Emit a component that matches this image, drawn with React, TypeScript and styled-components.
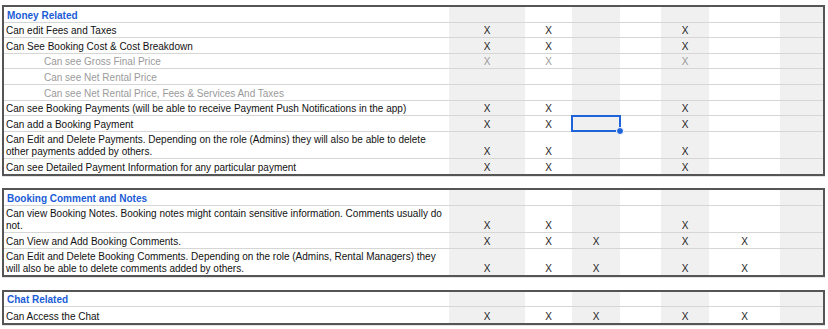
import React from "react";
import styled, { createGlobalStyle, css } from "styled-components";

const GlobalStyle = createGlobalStyle`
  html, body {
    margin: 0;
    padding: 0;
    background: #ffffff;
  }
  body {
    font-family: "Liberation Sans", Arial, sans-serif;
    font-size: 10px;
    color: #111;
  }
  * { box-sizing: border-box; }
`;

const COLS = "445px 76px 47px 48px 41px 48px 71px 43px";
const SHADED = [false, true, false, true, false, true, false, true];

const Sheet = styled.div`
  width: 828px;
  height: 329px;
  padding: 5px 3px 0 2px;
  display: flex;
  flex-direction: column;
  overflow: hidden;
`;

const Section = styled.div`
  width: 823px;
  border: 2px solid #555555;
  display: flex;
  flex-direction: column;
`;

const Spacer = styled.div<{ $h: number }>`
  height: ${(p) => p.$h}px;
  flex: none;
  border-top: 1px solid #e4e4e4;
`;

const Row = styled.div<{ $last?: boolean }>`
  display: grid;
  grid-template-columns: ${COLS};
  min-height: 15.6px;
  border-bottom: ${(p) => (p.$last ? "none" : "1px solid #d6d6d6")};
`;

const Cell = styled.div<{ $shade?: boolean }>`
  position: relative;
  display: flex;
  align-items: flex-end;
  padding-top: 2px;
  padding-bottom: 0;
  line-height: 12px;
  background: ${(p) => (p.$shade ? "#f0f0f0" : "#ffffff")};
`;

const Label = styled(Cell)<{ $indent?: boolean; $muted?: boolean; $head?: boolean }>`
  padding-left: ${(p) => (p.$indent ? "40px" : "2px")};
  padding-right: 2px;
  color: ${(p) => (p.$muted ? "#9a9a9a" : "#111111")};
  ${(p) =>
    p.$head &&
    css`
      color: #1a5cd6;
      font-weight: bold;
      padding-left: 3px;
    `}
`;

const Mark = styled(Cell)<{ $muted?: boolean }>`
  justify-content: center;
  color: ${(p) => (p.$muted ? "#9a9a9a" : "#222222")};
`;

const Selection = styled.div`
  position: absolute;
  z-index: 2;
  left: -1px;
  top: -1px;
  right: -1px;
  bottom: -1px;
  border: 2px solid #1f63d9;
  pointer-events: none;
`;

const Handle = styled.div`
  position: absolute;
  right: -5px;
  bottom: -5px;
  width: 8px;
  height: 8px;
  border-radius: 50%;
  background: #1f63d9;
  border: 1px solid #ffffff;
`;

type Item = {
  text: string;
  marks: number[];
  indent?: boolean;
  muted?: boolean;
  selected?: number;
};

type Group = { title: string; gapBefore: number; items: Item[] };

const ALL = [1, 2, 3, 5, 6];
const MAIN = [1, 2, 5];

const groups: Group[] = [
  {
    title: "Money Related",
    gapBefore: 0,
    items: [
      { text: "Can edit Fees and Taxes", marks: MAIN },
      { text: "Can See Booking Cost & Cost Breakdown", marks: MAIN },
      { text: "Can see Gross Final Price", marks: MAIN, indent: true, muted: true },
      { text: "Can see Net Rental Price", marks: [], indent: true, muted: true },
      {
        text: "Can see Net Rental Price, Fees & Services And Taxes",
        marks: [],
        indent: true,
        muted: true,
      },
      {
        text: "Can see Booking Payments (will be able to receive Payment Push Notifications in the app)",
        marks: MAIN,
      },
      { text: "Can add a Booking Payment", marks: MAIN, selected: 3 },
      {
        text: "Can Edit and Delete Payments. Depending on the role (Admins) they will also be able to delete other payments added by others.",
        marks: MAIN,
      },
      { text: "Can see Detailed Payment Information for any particular payment", marks: MAIN },
    ],
  },
  {
    title: "Booking Comment and Notes",
    gapBefore: 12,
    items: [
      {
        text: "Can view Booking Notes. Booking notes might contain sensitive information. Comments usually do not.",
        marks: MAIN,
      },
      { text: "Can View and Add Booking Comments.", marks: ALL },
      {
        text: "Can Edit and Delete Booking Comments. Depending on the role (Admins, Rental Managers) they will also be able to delete comments added by others.",
        marks: ALL,
      },
    ],
  },
  {
    title: "Chat Related",
    gapBefore: 13,
    items: [{ text: "Can Access the Chat", marks: ALL }],
  },
];

const MarkCells: React.FC<{ item?: Item }> = ({ item }) => (
  <>
    {[1, 2, 3, 4, 5, 6, 7].map((c) => (
      <Mark key={c} $shade={SHADED[c]} $muted={item?.muted}>
        {item && item.marks.includes(c) ? "X" : ""}
        {item && item.selected === c && (
          <Selection>
            <Handle />
          </Selection>
        )}
      </Mark>
    ))}
  </>
);

const GroupTable: React.FC<{ group: Group }> = ({ group }) => (
  <Section>
    <Row>
      <Label $head>{group.title}</Label>
      <MarkCells />
    </Row>
    {group.items.map((item, i) => (
      <Row key={i} $last={i === group.items.length - 1}>
        <Label $indent={item.indent} $muted={item.muted}>
          <span>{item.text}</span>
        </Label>
        <MarkCells item={item} />
      </Row>
    ))}
  </Section>
);

export default function App() {
  return (
    <>
      <GlobalStyle />
      <Sheet>
        {groups.map((g) => (
          <React.Fragment key={g.title}>
            {g.gapBefore > 0 && <Spacer $h={g.gapBefore} />}
            <GroupTable group={g} />
          </React.Fragment>
        ))}
        <Spacer $h={8} />
      </Sheet>
    </>
  );
}
